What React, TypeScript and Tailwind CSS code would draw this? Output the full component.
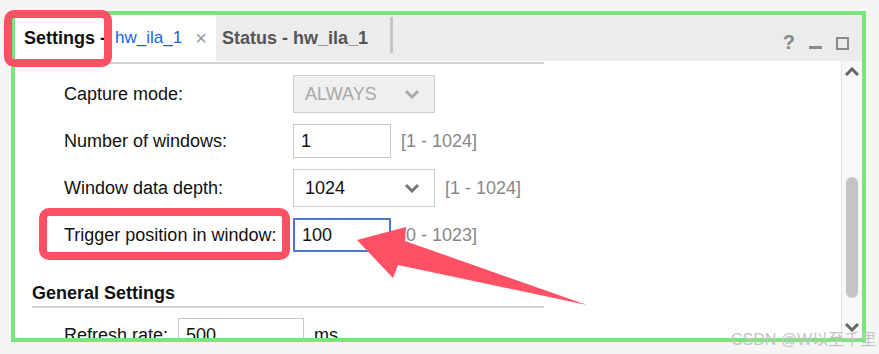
import React from "react";

const font = { fontFamily: '"Liberation Sans", Arial, sans-serif' };

const Chevron = ({ up = false, color = "#777" }: { up?: boolean; color?: string }) => (
  <svg width="16" height="10" viewBox="0 0 16 10">
    <polyline
      points={up ? "2,8 8,2 14,8" : "2,2 8,8 14,2"}
      fill="none"
      stroke={color}
      strokeWidth="3"
    />
  </svg>
);

const Select = ({ value, disabled = false }: { value: string; disabled?: boolean }) => (
  <div
    className={`w-[142px] h-[38px] flex items-center justify-between pl-[11px] pr-[14px] border border-[#cfcfcf] ${
      disabled ? "bg-[#efefef] text-[#a8a8a8]" : "bg-white text-[#111]"
    }`}
  >
    <span>{value}</span>
    <Chevron color={disabled ? "#aaa" : "#777"} />
  </div>
);

const Input = ({ value, focused = false, w = "w-[98px]" }: { value: string; focused?: boolean; w?: string }) => (
  <div
    className={`${w} h-[34px] flex items-center pl-[7px] bg-white text-[#111] ${
      focused ? "border-2 border-[#4a7bd0] pl-[6px]" : "border border-[#c8c8c8]"
    }`}
  >
    {value}
  </div>
);

const Row = ({ label, children }: { label: string; children: React.ReactNode }) => (
  <div className="h-[38px] flex items-center">
    <div className="w-[229px] text-[#111]">{label}</div>
    {children}
  </div>
);

export default function App() {
  return (
    <div className="relative w-[879px] h-[354px] bg-[#f5f5f5] overflow-hidden text-[18px]" style={font}>
      <div className="pt-[11px] pl-[11px]">
        <div className="w-[855px] h-[331px] border-4 border-[#7ae57a] flex flex-col overflow-hidden">
          {/* tab bar */}
          <div className="h-[46px] flex bg-[#ececec] shrink-0">
            <div className="w-[201px] bg-white flex items-center pl-[9px]">
              <span className="font-bold text-[18px] text-[#111]">Settings -</span>
              <span className="ml-[9px] text-[17px] text-[#1d5fe0]">hw_ila_1</span>
              <span className="ml-[13px] text-[20px] text-[#999]">×</span>
            </div>
            <div className="flex items-center pl-[6px] pr-[22px]">
              <span className="font-bold text-[18px] text-[#555]">Status - hw_ila_1</span>
            </div>
            <div className="w-[3px] bg-[#c6c6c6] mt-[2px] mb-[8px]" />
            <div className="flex-1 flex items-end justify-end gap-[14px] pr-[13px] pb-[11px]">
              <span className="font-bold text-[20px] leading-[15px] text-[#888]">?</span>
              <div className="w-[13px] h-[3px] bg-[#8a8a8a] mb-[1px]" />
              <div className="w-[13px] h-[13px] border-[2.5px] border-[#8a8a8a]" />
            </div>
          </div>

          {/* content */}
          <div className="flex-1 flex min-h-0">
            <div className="flex-1 bg-white overflow-hidden">
              <div className="mt-[1px] h-[2px] w-[529px] bg-[#d2d2d2]" />
              <div className="pl-[49px] pt-[11px] flex flex-col gap-[9px]">
                <Row label="Capture mode:">
                  <Select value="ALWAYS" disabled />
                </Row>
                <Row label="Number of windows:">
                  <Input value="1" />
                  <span className="ml-[10px] text-[#888]">[1 - 1024]</span>
                </Row>
                <Row label="Window data depth:">
                  <Select value="1024" />
                  <span className="ml-[10px] text-[#888]">[1 - 1024]</span>
                </Row>
                <Row label="Trigger position in window:">
                  <Input value="100" focused />
                  <span className="ml-[10px] text-[#888]">[0 - 1023]</span>
                </Row>
              </div>
              <div className="ml-[17px] mt-[27px] w-[512px]">
                <div className="font-bold text-[#111] leading-[24px]">General Settings</div>
                <div className="mt-[1px] h-[2px] bg-[#d2d2d2]" />
              </div>
              <div className="pl-[49px] mt-[10px] flex items-center">
                <span className="w-[114px] text-[#111]">Refresh rate:</span>
                <Input value="500" w="w-[126px]" />
                <span className="ml-[10px] text-[#111]">ms</span>
              </div>
            </div>
            <div className="w-[21px] bg-[#f8f8f8] border-l border-[#e2e2e2] flex flex-col items-center">
              <div className="mt-[6px]">
                <Chevron up color="#666" />
              </div>
              <div className="mt-[100px] w-[12px] h-[121px] rounded-full bg-[#c4c4c4]" />
              <div className="mt-[24px]">
                <Chevron color="#666" />
              </div>
            </div>
          </div>
        </div>
      </div>

      {/* annotations */}
      <div className="absolute left-[4px] top-[10px] w-[108px] h-[57px] border-[8px] border-[#ff5066] rounded-[10px]" />
      <div className="absolute left-[39px] top-[208px] w-[251px] h-[52px] border-[8px] border-[#ff5066] rounded-[10px]" />
      <svg className="absolute left-0 top-0 pointer-events-none" width="879" height="354">
        <polygon points="357,240 406,227 405,241 587,305 398,265 393,278" fill="#ff5066" />
      </svg>
      <div
        className="absolute left-[731px] top-[328px] whitespace-nowrap text-[16px] text-[#c4c4c4]"
        style={{ fontFamily: '"Liberation Sans", "Noto Sans CJK SC", sans-serif' }}
      >
        CSDN @W以至千里
      </div>
    </div>
  );
}
